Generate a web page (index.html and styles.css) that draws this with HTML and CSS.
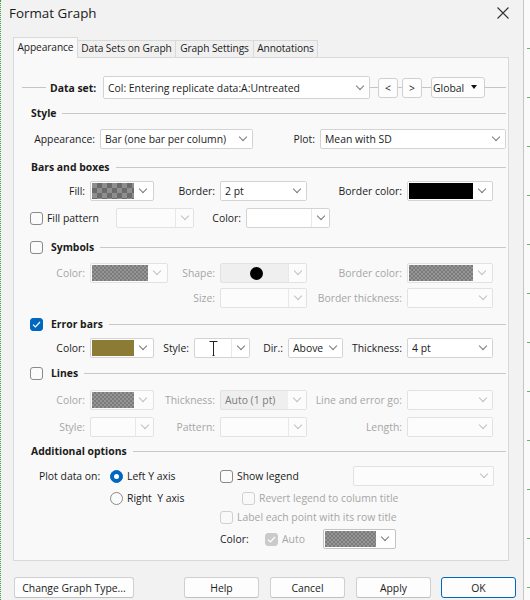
FILE: index.html
```html
<!DOCTYPE html>
<html>
<head>
<meta charset="utf-8">
<title>Format Graph</title>
<link rel="stylesheet" href="styles.css">
</head>
<body>
<div class="screen">
  <div class="dialog">
    <div class="titlebar">
      <span class="title">Format Graph</span>
      <svg class="close" width="12" height="12" viewBox="0 0 12 12"><path d="M0.5 0.5 L11.5 11.5 M11.5 0.5 L0.5 11.5" stroke="#333" stroke-width="1.1" fill="none"/></svg>
    </div>
    <div class="tabs">
      <div class="tab active t1">Appearance</div>
      <div class="tab t2">Data Sets on Graph</div>
      <div class="tab t3">Graph Settings</div>
      <div class="tab t4">Annotations</div>
    </div>
    <div class="panel">
      <div class="row dsrow">
        <div class="seg s24"></div>
        <div class="dslabel">Data set:</div>
        <div class="sel tall w267"><span class="val">Col: Entering replicate data:A:Untreated</span><span class="chev"></span></div>
        <div class="seg s8"></div>
        <div class="nav">&lt;</div>
        <div class="seg s4"></div>
        <div class="nav">&gt;</div>
        <div class="seg s9"></div>
        <div class="global"><span>Global</span><span class="tri"></span></div>
        <div class="seg grow"></div>
      </div>

      <div class="head mt4"><span class="htext">Style</span><span class="rule"></span></div>
      <div class="row mt6">
        <div class="lab w70">Appearance:</div>
        <div class="sel w153"><span class="val">Bar (one bar per column)</span><span class="chev"></span></div>
        <div class="lab w67">Plot:</div>
        <div class="sel w186"><span class="val">Mean with SD</span><span class="chev"></span></div>
      </div>

      <div class="head mt8"><span class="htext">Bars and boxes</span><span class="rule"></span></div>
      <div class="row mt4">
        <div class="lab w60">Fill:</div>
        <div class="sel sw w64"><span class="swatch checker"></span><span class="chev"></span></div>
        <div class="lab w66">Border:</div>
        <div class="sel w87"><span class="val">2 pt</span><span class="chev"></span></div>
        <div class="lab w100">Border color:</div>
        <div class="sel sw w86"><span class="swatch black"></span><span class="chev"></span></div>
      </div>
      <div class="row mt7">
        <div class="cbgroup w86"><span class="cb"></span><span>Fill pattern</span></div>
        <div class="sel dis w78"><span class="val"></span><span class="chev dv"></span></div>
        <div class="lab w52">Color:</div>
        <div class="sel w84"><span class="val"></span><span class="chev dv"></span></div>
      </div>

      <div class="head mt9"><span class="cb"></span><span class="htext">Symbols</span><span class="rule"></span></div>
      <div class="row mt6 off">
        <div class="lab w60">Color:</div>
        <div class="sel sw dis w78"><span class="swatch fine"></span><span class="chev"></span></div>
        <div class="lab w52">Shape:</div>
        <div class="sel dis gray w87"><span class="val center"><span class="dot"></span></span><span class="chev dv"></span></div>
        <div class="lab w100">Border color:</div>
        <div class="sel sw dis w86"><span class="swatch fine"></span><span class="chev"></span></div>
      </div>
      <div class="row mt5 off">
        <div class="lab w190">Size:</div>
        <div class="sel dis w87"><span class="val"></span><span class="chev dv"></span></div>
        <div class="lab w100">Border thickness:</div>
        <div class="sel dis w86"><span class="val"></span><span class="chev"></span></div>
      </div>

      <div class="head mt6"><span class="cb on"><svg width="9" height="7" viewBox="0 0 9 7"><path d="M1 3.6 L3.4 6 L8 1" stroke="#fff" stroke-width="1.2" fill="none"/></svg></span><span class="htext">Error bars</span><span class="rule"></span></div>
      <div class="row mt4">
        <div class="lab w60">Color:</div>
        <div class="sel sw w64"><span class="swatch olive"></span><span class="chev"></span></div>
        <div class="lab w40">Style:</div>
        <div class="sel w56 nopad"><span class="val center"><svg width="9" height="15" viewBox="0 0 9 15"><path d="M0.5 0.5 H8.5 M4.5 0.5 V14.5 M3.5 14.5 H5.5" stroke="#222" stroke-width="1" fill="none"/></svg></span><span class="chev dv"></span></div>
        <div class="lab w38">Dir.:</div>
        <div class="sel w55"><span class="val">Above</span><span class="chev"></span></div>
        <div class="lab w64">Thickness:</div>
        <div class="sel w86"><span class="val">4 pt</span><span class="chev"></span></div>
      </div>

      <div class="head mt5"><span class="cb"></span><span class="htext">Lines</span><span class="rule"></span></div>
      <div class="row mt7 off">
        <div class="lab w60">Color:</div>
        <div class="sel sw dis w64"><span class="swatch fine"></span><span class="chev"></span></div>
        <div class="lab w66">Thickness:</div>
        <div class="sel dis gray w87"><span class="val dval">Auto (1 pt)</span><span class="chev"></span></div>
        <div class="lab w100">Line and error go:</div>
        <div class="sel dis w86"><span class="val"></span><span class="chev"></span></div>
      </div>
      <div class="row mt7 off">
        <div class="lab w60">Style:</div>
        <div class="sel dis w64"><span class="val"></span><span class="chev dv"></span></div>
        <div class="lab w66">Pattern:</div>
        <div class="sel dis w87"><span class="val"></span><span class="chev dv"></span></div>
        <div class="lab w100">Length:</div>
        <div class="sel dis w86"><span class="val"></span><span class="chev"></span></div>
      </div>

      <div class="head mt4"><span class="htext">Additional options</span><span class="rule"></span></div>
      <div class="row mt5">
        <div class="lableft w80">Plot data on:</div>
        <div class="cbgroup w110"><span class="rb on"></span><span>Left Y axis</span></div>
        <div class="cbgroup w133"><span class="cb"></span><span>Show legend</span></div>
        <div class="sel dis w141"><span class="val"></span><span class="chev"></span></div>
      </div>
      <div class="row short mt3">
        <div class="sp80"></div>
        <div class="cbgroup w132"><span class="rb"></span><span>Right&nbsp; Y axis</span></div>
        <div class="cbgroup off"><span class="cb dis"></span><span>Revert legend to column title</span></div>
      </div>
      <div class="row short mt1">
        <div class="sp190"></div>
        <div class="cbgroup off"><span class="cb dis"></span><span>Label each point with its row title</span></div>
      </div>
      <div class="row mt3">
        <div class="sp190"></div>
        <div class="lableft w45">Color:</div>
        <div class="cbgroup w58 off"><span class="cb dison"><svg width="9" height="7" viewBox="0 0 9 7"><path d="M1 3.6 L3.4 6 L8 1" stroke="#fff" stroke-width="1.2" fill="none"/></svg></span><span>Auto</span></div>
        <div class="sel sw dark w73"><span class="swatch fine"></span><span class="chev"></span></div>
      </div>
    </div>
    <div class="buttons">
      <div class="btn bchange">Change Graph Type...</div>
      <div class="btn bhelp">Help</div>
      <div class="btn">Cancel</div>
      <div class="btn">Apply</div>
      <div class="btn ok">OK</div>
    </div>
  </div>
  <div class="edge"></div>
</div>
</body>
</html>
```
FILE: styles.css
```css
* { box-sizing: border-box; }
html, body { margin: 0; padding: 0; }
body {
  width: 530px;
  height: 600px;
  overflow: hidden;
  background: #fafafa;
  font-family: "Open Sans", "Noto Sans", sans-serif;
  font-size: 10.4px;
  color: #1b1b1b;
}
.screen { display: flex; height: 600px; }
.dialog {
  width: 524px;
  height: 600px;
  background: #f2f2f2;
  border-left: 1px dotted #3f9f3f;
  border-right: 1px solid #c6c6c6;
  display: flex;
  flex-direction: column;
}
.edge {
  flex: 1;
  background-color: #fafafa;
  background-image: repeating-linear-gradient(to bottom, transparent 0 48px, #67b567 48px 49px);
  background-size: 3px 100%;
  background-repeat: no-repeat;
  background-position: right top;
}

/* title */
.titlebar {
  height: 25px;
  display: flex;
  align-items: center;
  justify-content: space-between;
  padding: 0 14px 0 8px;
}
.title { font-size: 13.4px; color: #1a1a1a; }
.close { display: block; }

/* tabs */
.tabs {
  margin-top: 12px;
  padding-left: 12px;
  height: 20px;
  display: flex;
  align-items: flex-end;
  position: relative;
  z-index: 1;
}
.tab {
  height: 17px;
  line-height: 15px;
  border: 1px solid #d9d9d9;
  border-left: none;
  border-bottom: none;
  background: #f0f0f0;
  white-space: nowrap;
  text-align: center;
  font-size: 10.2px;
  letter-spacing: -0.1px;
}
.t1 { width: 65px; }
.t2 { width: 98px; }
.t3 { width: 78px; }
.t4 { width: 64px; }
.tab.active {
  height: 21px;
  line-height: 18px;
  margin-bottom: -1px;
  border-left: 1px solid #d9d9d9;
  background: #f9f9f9;
}

/* panel */
.panel {
  margin-left: 12px;
  width: 496px;
  height: 504px;
  border: 1px solid #d9d9d9;
  background: #f9f9f9;
  padding: 18px 2px 0 16px;
}
.row { display: flex; align-items: center; height: 20px; }
.row.short { height: 18px; }
.dsrow { height: 23px; margin-left: -8px; }
.seg { height: 1px; background: #c4c4c4; }
.s24 { width: 24px; margin-right: 4px; }
.s8 { width: 8px; }
.s4 { width: 4px; }
.s9 { width: 9px; }
.grow { flex: 1; }
.dslabel { width: 53px; font-weight: bold; }
.nav {
  width: 20px;
  height: 20px;
  border: 1px solid #d0d0d0;
  border-radius: 3px;
  background: #fdfdfd;
  display: flex;
  align-items: center;
  justify-content: center;
}
.global {
  width: 54px;
  height: 21px;
  border: 1px solid #d0d0d0;
  border-radius: 3px;
  background: #fdfdfd;
  display: flex;
  align-items: center;
  justify-content: space-between;
  padding: 0 7px 0 1px;
}
.tri {
  width: 0; height: 0;
  border-left: 3px solid transparent;
  border-right: 3px solid transparent;
  border-top: 4px solid #111;
  margin-top: -2px;
}

.head { display: flex; align-items: center; height: 20px; font-weight: bold; padding-left: 1px; }
.head .cb { margin-right: 8px; margin-left: -1px; }
.rule { flex: 1; height: 1px; background: #c8c8c8; margin-left: 6px; }

.mt1 { margin-top: 1px; }
.mt3 { margin-top: 3px; }
.mt4 { margin-top: 4px; }
.mt5 { margin-top: 5px; }
.mt6 { margin-top: 6px; }
.mt7 { margin-top: 7px; }
.mt8 { margin-top: 8px; }
.mt9 { margin-top: 9px; }

.lab { text-align: right; padding-right: 5px; white-space: nowrap; flex: none; }
.lableft { white-space: nowrap; flex: none; padding-left: 9px; }
.lableft.w45 { padding-left: 0; }
.off { color: #a6a6a6; }
.w38 { width: 38px; } .w40 { width: 40px; } .w45 { width: 45px; }
.w52 { width: 52px; } .w55 { width: 55px; } .w56 { width: 56px; }
.w58 { width: 58px; } .w60 { width: 60px; } .w64 { width: 64px; }
.w66 { width: 66px; } .w67 { width: 67px; } .w70 { width: 70px; }
.w73 { width: 73px; } .w78 { width: 78px; } .w80 { width: 80px; }
.w84 { width: 84px; } .w86 { width: 86px; } .w87 { width: 87px; }
.w100 { width: 100px; } .w110 { width: 110px; } .w132 { width: 132px; }
.w133 { width: 133px; } .w141 { width: 141px; } .w153 { width: 153px; }
.w186 { width: 186px; } .w190 { width: 190px; } .w267 { width: 267px; }
.sp80 { width: 80px; flex: none; }
.sp190 { width: 190px; flex: none; }

/* combo boxes */
.sel {
  flex: none;
  height: 20px;
  display: flex;
  align-items: stretch;
  border: 1px solid #d3d3d3;
  border-radius: 2px;
  background: #fff;
  padding-left: 4px;
  color: #1b1b1b;
}
.sel.tall { height: 23px; }
.sel.nopad { padding-left: 0; }
.sel .val {
  flex: 1;
  display: flex;
  align-items: center;
  white-space: nowrap;
  overflow: hidden;
}
.sel .val.center { justify-content: center; }
.chev {
  width: 18px;
  flex: none;
  display: flex;
  align-items: center;
  justify-content: center;
  background: #fff;
}
.chev::after {
  content: "";
  width: 5px;
  height: 5px;
  border-right: 1px solid #7a7a7a;
  border-bottom: 1px solid #7a7a7a;
  transform: translateY(-2px) rotate(45deg);
}
.chev.dv { border-left: 1px solid #e8e8e8; }
.sel.dis { border-color: #e2e2e2; background: #fcfcfc; }
.sel.dis .chev { background: #fcfcfc; }
.sel.dis .chev::after { border-color: #c0c0c0; }
.sel.gray { background: #efefef; }
.sel.gray .val { background: #efefef; }
.sel.dark { border-color: #c4c4c4; }
.dval { color: #7c7c7c; }
.sel.sw { padding: 1px; }
.swatch { flex: 1; }
.checker {
  background-color: #8e8e8e;
  background-image: conic-gradient(#6b6b6b 25%, transparent 0 50%, #6b6b6b 0 75%, transparent 0);
  background-size: 10px 10px;
}
.fine {
  background-color: #959595;
  background-image: conic-gradient(#7b7b7b 25%, transparent 0 50%, #7b7b7b 0 75%, transparent 0);
  background-size: 4px 4px;
}
.black { background: #000; }
.olive { background: #8b7b35; }
.dot { width: 13px; height: 13px; border-radius: 50%; background: #000; }

/* check boxes & radios */
.cbgroup { display: flex; align-items: center; gap: 4px; flex: none; white-space: nowrap; }
.cb {
  width: 13px;
  height: 13px;
  flex: none;
  border: 1px solid #8a8a8a;
  border-radius: 3px;
  background: #fbfbfb;
  display: flex;
  align-items: center;
  justify-content: center;
}
.cb.on { background: #0067c0; border-color: #0067c0; }
.cb.dis { border-color: #d0d0d0; background: #f9f9f9; }
.cb.dison { background: #cacaca; border-color: #cacaca; }
.rb {
  width: 13px;
  height: 13px;
  flex: none;
  border: 1px solid #8a8a8a;
  border-radius: 50%;
  background: #fbfbfb;
  display: flex;
  align-items: center;
  justify-content: center;
}
.rb.on { background: #0067c0; border-color: #0067c0; }
.rb.on::after { content: ""; width: 5px; height: 5px; border-radius: 50%; background: #fff; }

/* bottom buttons */
.buttons {
  margin-top: 16px;
  padding-left: 13px;
  display: flex;
  gap: 11px;
}
.btn {
  width: 75px;
  height: 21px;
  border: 1px solid #d0d0d0;
  border-bottom-color: #c0c0c0;
  border-radius: 3px;
  background: #fdfdfd;
  display: flex;
  align-items: center;
  justify-content: center;
  white-space: nowrap;
}
.bchange { width: 120px; }
.bhelp { margin-left: 39px; }
.btn.ok { border: 1px solid #0067c0; margin-left: -1px; }
```
